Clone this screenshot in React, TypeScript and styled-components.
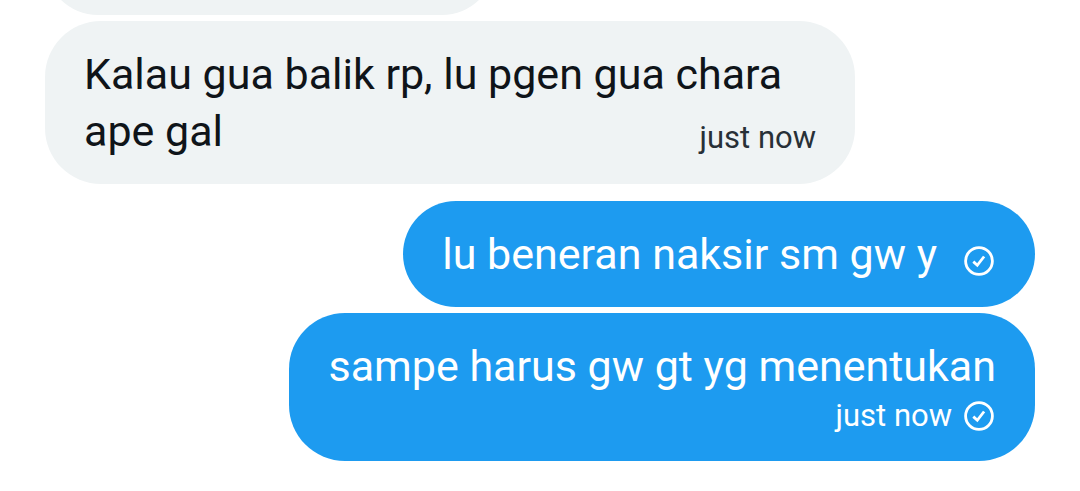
import React from "react";
import styled, { createGlobalStyle } from "styled-components";

const Global = createGlobalStyle`
  * { box-sizing: border-box; }
  body {
    margin: 0;
    background: #ffffff;
    font-family: Roboto, "Noto Sans", sans-serif;
  }
`;

const Thread = styled.main`
  display: flex;
  flex-direction: column;
  gap: 17px;
  padding: 0 45px 30px;
`;

const Group = styled.section<{ $own?: boolean }>`
  display: flex;
  flex-direction: column;
  align-items: ${(p) => (p.$own ? "flex-end" : "flex-start")};
  gap: 6px;
`;

const Meta = styled.footer<{ $own?: boolean }>`
  display: flex;
  align-items: center;
  justify-content: flex-end;
  gap: 12px;
  min-height: 42px;
  color: ${(p) => (p.$own ? "#ffffff" : "#283037")};
  font-size: 31px;
  line-height: 42px;
  white-space: nowrap;
`;

/* The time floats into the free end of the last line, or takes a line of its own. */
const Bubble = styled.article<{ $own?: boolean; $stacked?: boolean }>`
  display: ${(p) => (p.$stacked ? "block" : "flow-root")};
  max-width: calc(100% - 180px);
  padding: 25px 39px 24px;
  border-radius: 56px;
  background: ${(p) => (p.$own ? "#1d9bf0" : "#eff3f4")};
  color: ${(p) => (p.$own ? "#ffffff" : "#0f1419")};
  font-size: 43px;
  line-height: 57px;

  ${Meta} {
    float: ${(p) => (p.$stacked ? "none" : "right")};
    margin: ${(p) => (p.$stacked ? "0" : "14px 0 0 27px")};
  }
`;

const Clip = styled.div`
  display: flex;
  align-items: flex-end;
  width: 100%;
  height: 15px;
  overflow: hidden;
`;

const Previous = styled.div`
  flex: none;
  width: 450px;
  height: 106px;
  border-radius: 56px;
  background: #eff3f4;
`;

const Check = () => (
  <svg width="32" height="30" viewBox="0 0 32 30" fill="none" stroke="currentColor" strokeWidth="2.8" role="img" aria-label="Sent">
    <circle cx="15" cy="15" r="13.4" />
    <path d="M9.3 15.6l4 3.7 6.8-8.8" />
  </svg>
);

export default function App() {
  return (
    <>
      <Global />
      <Thread>
        <Group>
          <Clip>
            <Previous />
          </Clip>
          <Bubble>
            <span>Kalau gua balik rp, lu pgen gua chara ape gal</span>
            <Meta>just now</Meta>
          </Bubble>
        </Group>
        <Group $own>
          <Bubble $own>
            <span>lu beneran naksir sm gw y</span>
            <Meta $own>
              <Check />
            </Meta>
          </Bubble>
          <Bubble $own $stacked>
            <span>sampe harus gw gt yg menentukan</span>
            <Meta $own>
              just now
              <Check />
            </Meta>
          </Bubble>
        </Group>
      </Thread>
    </>
  );
}
